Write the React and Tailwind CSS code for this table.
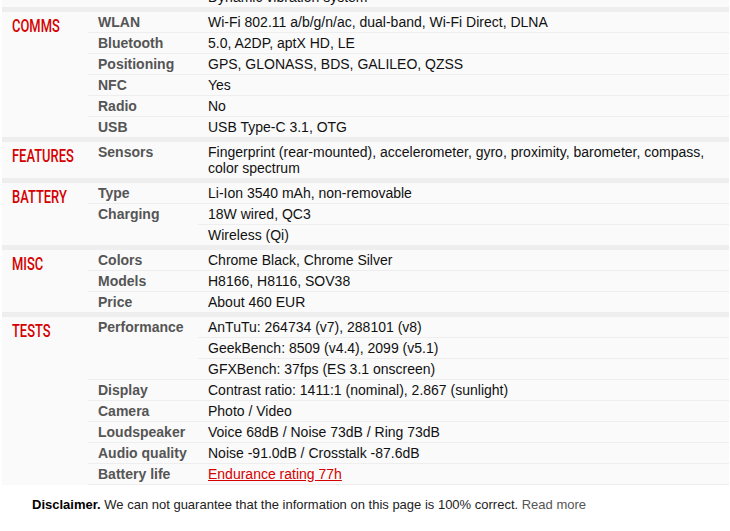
import React from "react";

const sections = [
  {
    title: "",
    rows: [{ t: "", v: ["Dynamic vibration system"] }],
  },
  {
    title: "COMMS",
    rows: [
      { t: "WLAN", v: ["Wi-Fi 802.11 a/b/g/n/ac, dual-band, Wi-Fi Direct, DLNA"] },
      { t: "Bluetooth", v: ["5.0, A2DP, aptX HD, LE"] },
      { t: "Positioning", v: ["GPS, GLONASS, BDS, GALILEO, QZSS"] },
      { t: "NFC", v: ["Yes"] },
      { t: "Radio", v: ["No"] },
      { t: "USB", v: ["USB Type-C 3.1, OTG"] },
    ],
  },
  {
    title: "FEATURES",
    rows: [
      {
        t: "Sensors",
        v: [
          <>
            Fingerprint (rear-mounted), accelerometer, gyro, proximity, barometer, compass,
            <br />
            color spectrum
          </>,
        ],
      },
    ],
  },
  {
    title: "BATTERY",
    rows: [
      { t: "Type", v: ["Li-Ion 3540 mAh, non-removable"] },
      { t: "Charging", v: ["18W wired, QC3", "Wireless (Qi)"] },
    ],
  },
  {
    title: "MISC",
    rows: [
      { t: "Colors", v: ["Chrome Black, Chrome Silver"] },
      { t: "Models", v: ["H8166, H8116, SOV38"] },
      { t: "Price", v: ["About 460 EUR"] },
    ],
  },
  {
    title: "TESTS",
    last: true,
    rows: [
      {
        t: "Performance",
        v: [
          "AnTuTu: 264734 (v7), 288101 (v8)",
          "GeekBench: 8509 (v4.4), 2099 (v5.1)",
          "GFXBench: 37fps (ES 3.1 onscreen)",
        ],
      },
      { t: "Display", v: ["Contrast ratio: 1411:1 (nominal), 2.867 (sunlight)"] },
      { t: "Camera", v: ["Photo / Video"] },
      { t: "Loudspeaker", v: ["Voice 68dB / Noise 73dB / Ring 73dB"] },
      { t: "Audio quality", v: ["Noise -91.0dB / Crosstalk -87.6dB"] },
      {
        t: "Battery life",
        v: [
          <span className="text-[#d50000] underline">Endurance rating 77h</span>,
        ],
      },
    ],
  },
];

function Section({ s }) {
  return (
    <div className="flex bg-[#fafafa]">
      <div className="w-[86px] shrink-0 pl-[10px] pt-[4px]">
        {s.title && (
          <span className="inline-block origin-left scale-x-[0.68] font-['Roboto',sans-serif] text-[19px] font-medium leading-[20px] text-[#d50000] whitespace-nowrap">
            {s.title}
          </span>
        )}
      </div>
      <div className="flex-1">
        {s.rows.map((r, ri) => {
          const isLast = ri === s.rows.length - 1;
          const border = !isLast || s.last ? "border-b border-[#eeeeee]" : "";
          return (
            <div key={ri} className={`flex ${border}`}>
              <div className="w-[110px] shrink-0 px-[10px] py-[2px] leading-4 font-bold text-[#555] whitespace-nowrap">
                {r.t}
              </div>
              <div className="flex-1">
                {r.v.map((x, vi) => (
                  <div
                    key={vi}
                    className={`px-[10px] py-[2px] leading-4 text-[#111] ${
                      vi < r.v.length - 1 ? "border-b border-[#eeeeee]" : ""
                    }`}
                  >
                    {x}
                  </div>
                ))}
              </div>
            </div>
          );
        })}
      </div>
    </div>
  );
}

export default function App() {
  return (
    <div className="min-h-[531px] bg-white font-['Liberation_Sans',Arial,sans-serif] text-[14px] overflow-hidden">
      <div className="ml-[2px] w-[727px] mt-[-13px]">
        {sections.map((s, i) => (
          <React.Fragment key={i}>
            {i > 0 && <div className="h-[5px] bg-[#eeeeee]" />}
            <Section s={s} />
          </React.Fragment>
        ))}
        <div className="pl-[30px] pt-[12px] leading-4 text-[13px] text-[#222]">
          <b className="text-black">Disclaimer.</b> We can not guarantee that the information on
          this page is 100% correct. <span className="text-[#555]">Read more</span>
        </div>
      </div>
    </div>
  );
}
